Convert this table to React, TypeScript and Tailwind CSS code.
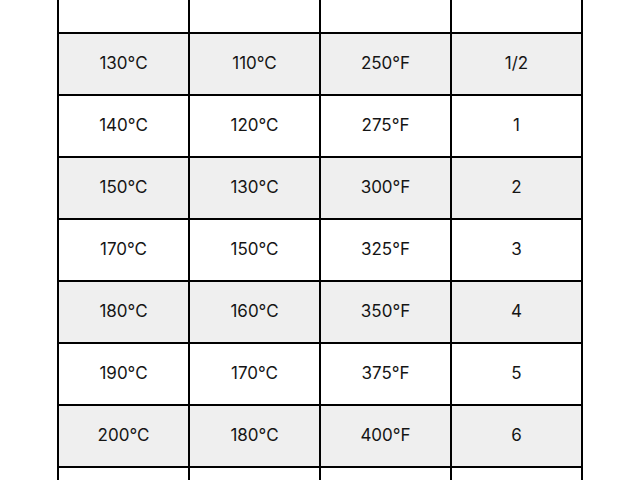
import React from 'react';

const rows: string[][] = [
  ['', '', '', ''],
  ['130°C', '110°C', '250°F', '1/2'],
  ['140°C', '120°C', '275°F', '1'],
  ['150°C', '130°C', '300°F', '2'],
  ['170°C', '150°C', '325°F', '3'],
  ['180°C', '160°C', '350°F', '4'],
  ['190°C', '170°C', '375°F', '5'],
  ['200°C', '180°C', '400°F', '6'],
  ['', '', '', ''],
];

const App: React.FC = () => {
  return (
    <div className="w-[640px] h-[480px] overflow-hidden bg-white" style={{ fontFamily: 'Inter, "Noto Sans", sans-serif' }}>
      <div className="ml-[57px] mt-[-30px] w-[526px] grid grid-cols-[repeat(4,129px)] gap-[2px] p-[2px] bg-black">
        {rows.map((row, i) =>
          row.map((cell, j) => (
            <div
              key={`${i}-${j}`}
              className={`h-[60px] flex items-center justify-center text-[17px] text-[#151515] ${i % 2 === 1 ? 'bg-[#efefef]' : 'bg-white'}`}
            >
              {cell}
            </div>
          ))
        )}
      </div>
    </div>
  );
};

export default App;
